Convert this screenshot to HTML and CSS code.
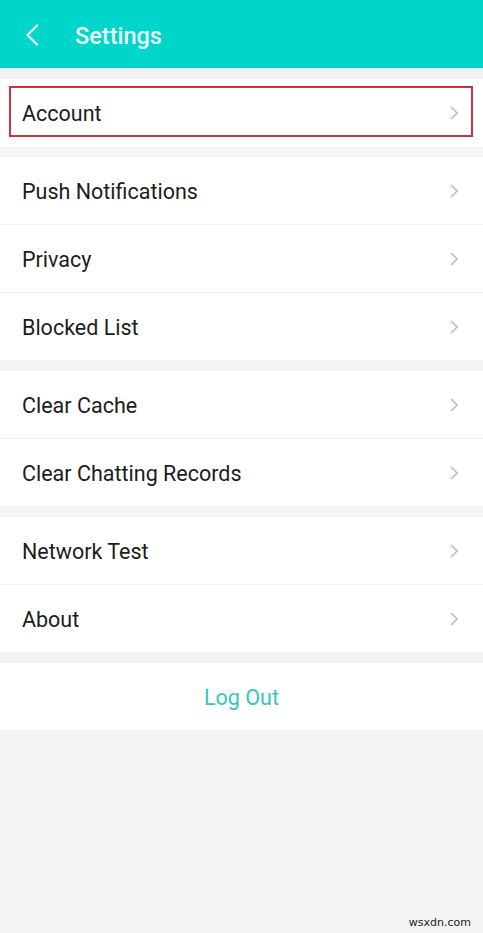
FILE: index.html
```html
<!DOCTYPE html>
<html>
<head>
<meta charset="utf-8">
<link rel="stylesheet" href="styles.css">
</head>
<body>
<div class="app">
  <header class="topbar">
    <svg class="back" width="14" height="22" viewBox="0 0 14 22"><path d="M12 1.5 L2.5 11 L12 20.5" fill="none" stroke="#e9fffd" stroke-width="2.2" stroke-linecap="round" stroke-linejoin="round"/></svg>
    <span class="title">Settings</span>
  </header>

  <section class="group">
    <div class="row highlighted"><span>Account</span><svg class="chev" viewBox="0 0 8 14"><path d="M1 1 L7 7 L1 13" fill="none" stroke="#bdbdbd" stroke-width="1.6"/></svg></div>
  </section>

  <section class="group">
    <div class="row"><span>Push Notifications</span><svg class="chev" viewBox="0 0 8 14"><path d="M1 1 L7 7 L1 13" fill="none" stroke="#bdbdbd" stroke-width="1.6"/></svg></div>
    <div class="row"><span>Privacy</span><svg class="chev" viewBox="0 0 8 14"><path d="M1 1 L7 7 L1 13" fill="none" stroke="#bdbdbd" stroke-width="1.6"/></svg></div>
    <div class="row"><span>Blocked List</span><svg class="chev" viewBox="0 0 8 14"><path d="M1 1 L7 7 L1 13" fill="none" stroke="#bdbdbd" stroke-width="1.6"/></svg></div>
  </section>

  <section class="group">
    <div class="row"><span>Clear Cache</span><svg class="chev" viewBox="0 0 8 14"><path d="M1 1 L7 7 L1 13" fill="none" stroke="#bdbdbd" stroke-width="1.6"/></svg></div>
    <div class="row"><span>Clear Chatting Records</span><svg class="chev" viewBox="0 0 8 14"><path d="M1 1 L7 7 L1 13" fill="none" stroke="#bdbdbd" stroke-width="1.6"/></svg></div>
  </section>

  <section class="group">
    <div class="row"><span>Network Test</span><svg class="chev" viewBox="0 0 8 14"><path d="M1 1 L7 7 L1 13" fill="none" stroke="#bdbdbd" stroke-width="1.6"/></svg></div>
    <div class="row"><span>About</span><svg class="chev" viewBox="0 0 8 14"><path d="M1 1 L7 7 L1 13" fill="none" stroke="#bdbdbd" stroke-width="1.6"/></svg></div>
  </section>

  <section class="group">
    <div class="row logout">Log Out</div>
  </section>

  <div class="spacer"></div>
  <div class="watermark">wsxdn.com</div>
</div>
</body>
</html>
```
FILE: styles.css
```css
html, body {
  margin: 0;
  padding: 0;
  background: #f3f3f3;
}
.app {
  width: 483px;
  height: 933px;
  display: flex;
  flex-direction: column;
  font-family: Roboto, "Noto Sans", sans-serif;
  background: #f3f3f3;
}
.topbar {
  height: 68px;
  background: #00d5c9;
  display: flex;
  align-items: center;
  box-sizing: border-box;
  padding-left: 25px;
  flex-shrink: 0;
}
.back {
  width: 14px;
  height: 22px;
  margin-top: 2px;
}
.title {
  margin-left: 36px;
  color: #e9fffd;
  font-size: 23.5px;
  font-weight: 500;
  margin-top: 3px;
}
.group {
  background: #fff;
  margin-top: 11px;
  display: flex;
  flex-direction: column;
}
.group:nth-of-type(2) {
  margin-top: 10px;
}
.row {
  height: 68px;
  display: flex;
  align-items: center;
  justify-content: space-between;
  padding: 1px 25px 0 22px;
  box-sizing: border-box;
  font-size: 21.5px;
  color: #1c1c1c;
  border-top: 1px solid #f1f1f1;
}
.row:first-child {
  border-top: none;
  height: 67px;
}
.chev {
  width: 8px;
  height: 14px;
}
.highlighted {
  position: relative;
}
.row.highlighted {
  height: 68px;
  padding-top: 0;
}
.highlighted::after {
  content: "";
  position: absolute;
  left: 9px;
  right: 10px;
  top: 7px;
  bottom: 10px;
  border: 2px solid #c5353d;
}
.logout {
  justify-content: center;
  color: #35c6bc;
  padding: 1px 0 0;
}
.spacer {
  flex: 1;
}
.watermark {
  align-self: flex-end;
  margin: 0 12px 4px 0;
  font-family: "DejaVu Sans", Verdana, sans-serif;
  font-size: 11px;
  color: #222;
}
```
